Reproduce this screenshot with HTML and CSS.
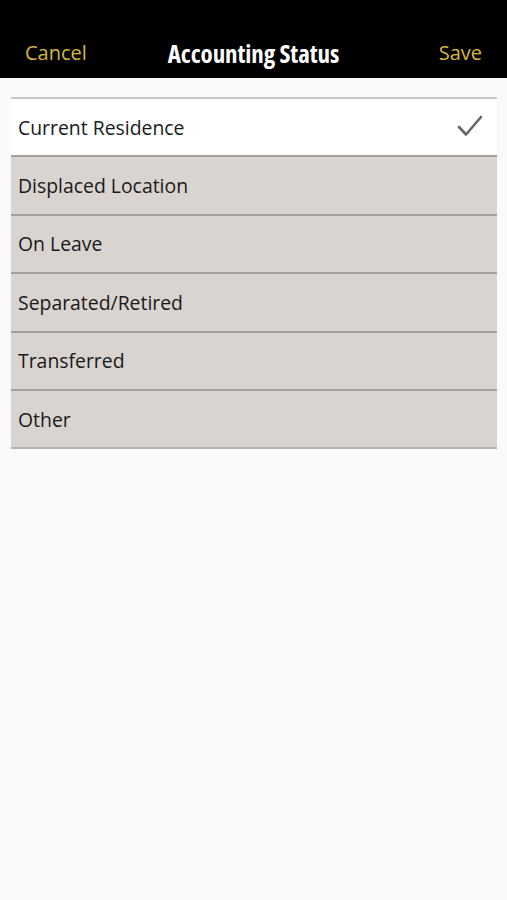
FILE: index.html
```html
<!DOCTYPE html>
<html lang="en">
<head>
  <meta charset="UTF-8">
  <meta name="viewport" content="width=device-width, initial-scale=1.0">
  <title>Accounting Status</title>
  <link rel="stylesheet" href="styles.css">
</head>
<body>
<div class="nav-bar">
  <a class="nav-btn" href="#">Cancel</a>
  <h1 class="nav-title">Accounting Status</h1>
  <a class="nav-btn nav-right" href="#">Save</a>
</div>
<ul class="status-list">
  <li class="status-item selected">
    <span>Current Residence</span>
    <svg class="check" width="26" height="22" viewBox="0 0 26 22">
      <path d="M2 12 L9 19.5 L24 2" fill="none" stroke="#666" stroke-width="2.6" stroke-linecap="round" stroke-linejoin="round"/>
    </svg>
  </li>
  <li class="status-item"><span>Displaced Location</span></li>
  <li class="status-item"><span>On Leave</span></li>
  <li class="status-item"><span>Separated/Retired</span></li>
  <li class="status-item"><span>Transferred</span></li>
  <li class="status-item"><span>Other</span></li>
</ul>
</body>
</html>
```

FILE: styles.css
```css
body {
  margin: 0;
  font-family: "Open Sans", "Noto Sans", sans-serif;
  background-color: #fafafa;
  height: 100vh;
}

.nav-bar {
  background-color: #000;
  height: 78px;
  box-sizing: border-box;
  padding: 39px 25px 0 25px;
  display: grid;
  grid-template-columns: 1fr auto 1fr;
  align-items: start;
}

.nav-btn {
  color: #d8b73c;
  text-decoration: none;
  font-size: 20px;
  line-height: 28px;
}

.nav-right {
  justify-self: end;
}

.nav-title {
  margin: 0;
  color: #fff;
  font-size: 25px;
  font-weight: 700;
  font-stretch: 75%;
  line-height: 28px;
  letter-spacing: -0.1px;
}

.status-list {
  list-style: none;
  margin: 19px 10px 0 11px;
  padding: 0;
  border-top: 2px solid #c6c6c6;
}

.status-item {
  height: 56.4px;
  border-bottom: 2px solid #a39f9b;
  background-color: #d9d4cf;
  padding: 0 14px 0 7px;
  display: flex;
  align-items: center;
  justify-content: space-between;
  font-size: 19.4px;
  color: #1a1a1a;
}

.status-item.selected {
  background-color: #fff;
}

.status-item:last-child {
  border-bottom-color: #b5b1ad;
}

.check {
  margin-bottom: 2px;
}
```
